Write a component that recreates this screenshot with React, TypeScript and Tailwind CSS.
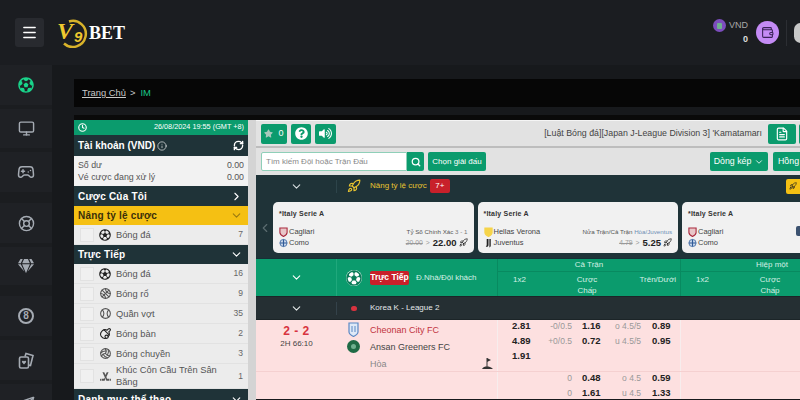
import { ReactNode } from 'react';
import {
  ChevronDown,
  ChevronLeft,
  ChevronRight,
  Clock,
  Info,
  RefreshCw,
  Rocket,
  Search,
  Monitor,
  Gamepad2,
  LifeBuoy,
  FileText,
  Wallet,
  Send,
  Menu,
} from 'lucide-react';
import { FaFutbol, FaRegFutbol, FaStar, FaQuestionCircle, FaVolumeUp, FaGem } from 'react-icons/fa';
import { TbBallBasketball, TbBallTennis, TbPingPong, TbBallVolleyball } from 'react-icons/tb';
import { MdOutlineSportsHockey } from 'react-icons/md';

const font = "font-['Liberation_Sans',Arial,sans-serif]";

function RailItem({ children, className = '' }: { children: ReactNode; className?: string }) {
  return (
    <div className={`shrink-0 flex items-center justify-center bg-[#1f2125] text-[#a5abb3] ${className}`}>
      {children}
    </div>
  );
}

function Rail() {
  return (
    <div className="w-[52px] shrink-0 flex flex-col gap-[4px] bg-[#1b1d20]">
      <RailItem className="h-[40px]">
        <FaFutbol size={16} className="text-[#19d38a]" />
      </RailItem>
      <RailItem className="h-[39px]">
        <Monitor size={17} />
      </RailItem>
      <RailItem className="h-[40px]">
        <Gamepad2 size={18} />
      </RailItem>
      <RailItem className="h-[40px] mt-[7px]">
        <LifeBuoy size={17} />
      </RailItem>
      <RailItem className="h-[38px]">
        <FaGem size={16} />
      </RailItem>
      <RailItem className="h-[40px] mt-[7px]">
        <span className="w-[16px] h-[16px] rounded-full border-2 border-[#a5abb3] flex items-center justify-center text-[10px] font-bold leading-none">
          8
        </span>
      </RailItem>
      <RailItem className="h-[40px]">
        <svg width="17" height="17" viewBox="0 0 17 17" fill="none" stroke="currentColor" strokeWidth="1.600">
          <rect x="1.500" y="5" width="9" height="11" rx="1.500" />
          <path d="M7 4.500l1-3 7 2-2.500 10-2-.5" />
          <path d="M6 12.500l-2-2.200a1 1 0 0 1 2-1 1 1 0 0 1 2 1z" fill="currentColor" stroke="none" />
        </svg>
      </RailItem>
      <RailItem className="h-[40px]">
        <Send size={17} />
      </RailItem>
    </div>
  );
}

function DarkRow({ children, h = 'h-[20px]' }: { children: ReactNode; h?: string }) {
  return (
    <div className={`${h} bg-[#1f3338] text-white font-bold text-[10px] flex items-center justify-between pl-[4px] pr-[5px] tracking-[0.2px]`}>
      {children}
    </div>
  );
}

function SportRow({
  icon,
  label,
  count,
  tall,
}: {
  icon: ReactNode;
  label: string;
  count: number;
  tall?: boolean;
}) {
  return (
    <div
      className={`flex items-center bg-[#ececec] border-b border-[#e2e2e2] pl-[6px] pr-[5px] text-[#555] text-[9.3px] ${tall ? 'h-[25px]' : 'h-[20px]'}`}
    >
      <span className="w-[14px] h-[14px] border border-[#e2e2e2] bg-[#f0f0f0] shrink-0" />
      <span className="w-[22px] flex justify-center shrink-0 text-[#555]">{icon}</span>
      <span className="flex-1 leading-[12px] pr-[8px]">{label}</span>
      <span className="text-[8.5px] text-[#666]">{count}</span>
    </div>
  );
}

function SidePanel() {
  return (
    <div className="w-[174px] shrink-0">
      <div className="h-[15px] bg-[#0b9b6d] flex items-center justify-between px-[4px] text-white">
        <Clock size={9} strokeWidth={3} />
        <span className="text-[7.3px]">26/08/2024 19:55 (GMT +8)</span>
      </div>
      <div className="h-[21px] bg-[#1f3338] text-white font-bold text-[10px] flex items-center justify-between pl-[4px] pr-[4px]">
        <span className="flex items-center gap-[2px]">
          Tài khoản (VND)
          <Info size={10} strokeWidth={1.5} />
        </span>
        <RefreshCw size={11} strokeWidth={3} />
      </div>
      <div className="h-[30px] bg-[#f2f2f2] text-[#555] text-[8.8px] leading-[12px] px-[4px] flex flex-col justify-center">
        <div className="flex justify-between">
          <span>Số dư</span>
          <span>0.00</span>
        </div>
        <div className="flex justify-between">
          <span>Vé cược đang xử lý</span>
          <span>0.00</span>
        </div>
      </div>
      <DarkRow>
        <span>Cược Của Tôi</span>
        <ChevronRight size={13} />
      </DarkRow>
      <div className="h-[19px] bg-[#f5c013] text-[#3a2f0a] font-bold text-[10px] flex items-center justify-between pl-[4px] pr-[5px] tracking-[0.2px]">
        <span>Nâng tỷ lệ cược</span>
        <ChevronDown size={13} className="text-[#9a7a10]" />
      </div>
      <SportRow icon={<FaRegFutbol size={12} className="text-[#222]" />} label="Bóng đá" count={7} />
      <DarkRow h="h-[19px]">
        <span>Trực Tiếp</span>
        <ChevronDown size={13} />
      </DarkRow>
      <SportRow icon={<FaRegFutbol size={12} className="text-[#222]" />} label="Bóng đá" count={16} />
      <SportRow icon={<TbBallBasketball size={13} />} label="Bóng rổ" count={9} />
      <SportRow icon={<TbBallTennis size={13} />} label="Quần vợt" count={35} />
      <SportRow icon={<TbPingPong size={13} className="text-[#222]" />} label="Bóng bàn" count={2} />
      <SportRow icon={<TbBallVolleyball size={13} />} label="Bóng chuyền" count={3} />
      <SportRow icon={<MdOutlineSportsHockey size={13} />} label="Khúc Côn Cầu Trên Sân Băng" count={1} tall />
      <DarkRow>
        <span>Danh mục thể thao</span>
        <ChevronDown size={13} />
      </DarkRow>
    </div>
  );
}

function GreenBtn({ children, className = '' }: { children: ReactNode; className?: string }) {
  return (
    <div className={`bg-[#0b9b6d] text-white rounded-[2px] flex items-center justify-center shrink-0 ${className}`}>
      {children}
    </div>
  );
}

function ShieldLogo({ fill, stroke }: { fill: string; stroke: string }) {
  return (
    <svg width="9" height="10" viewBox="0 0 10 11" className="shrink-0">
      <path d="M1 1h8v5c0 2-2 3.500-4 4.500C3 9.500 1 8 1 6z" fill={fill} stroke={stroke} strokeWidth="1.200" />
    </svg>
  );
}

function DiamondLogo() {
  return (
    <svg width="9" height="10" viewBox="0 0 10 10" className="shrink-0">
      <circle cx="5" cy="5" r="4" fill="#c8d6ea" stroke="#4a72a8" />
      <path d="M1 5h8M5 1v8" stroke="#2f5a96" strokeWidth="1.200" />
    </svg>
  );
}

function JuveLogo() {
  return (
    <svg width="9" height="10" viewBox="0 0 10 11" className="shrink-0">
      <path d="M3 1h2v7a2 2 0 0 1-3 1.500L3 8zM6 1h1.500v7.500A2 2 0 0 1 6 10.500z" fill="#222" />
    </svg>
  );
}

function Team({ logo, name }: { logo: ReactNode; name: string }) {
  return (
    <div className="flex items-center gap-[1px] h-[11px] text-[7.5px] text-[#444]">
      {logo}
      <span>{name}</span>
    </div>
  );
}

interface BoostCard {
  home: string;
  away: string;
  homeLogo: ReactNode;
  awayLogo: ReactNode;
  market?: ReactNode;
  oldPrice?: string;
  newPrice?: string;
  badge?: boolean;
}

const cagliari = <ShieldLogo fill="#e8c6c8" stroke="#a9283c" />;
const verona = <ShieldLogo fill="#f6d44a" stroke="#f6d44a" />;

const boostCards: BoostCard[] = [
  {
    home: 'Cagliari',
    away: 'Como',
    homeLogo: cagliari,
    awayLogo: <DiamondLogo />,
    market: (
      <>
        Tỷ Số Chính Xác <span className="text-[#777]">3 - 1</span>
      </>
    ),
    oldPrice: '20.00',
    newPrice: '22.00',
  },
  {
    home: 'Hellas Verona',
    away: 'Juventus',
    homeLogo: verona,
    awayLogo: <JuveLogo />,
    market: (
      <>
        Nửa Trận/Cả Trận <span className="text-[#6f8fb5]">Hòa/Juventus</span>
      </>
    ),
    oldPrice: '4.79',
    newPrice: '5.25',
  },
  { home: 'Cagliari', away: 'Como', homeLogo: cagliari, awayLogo: <DiamondLogo />, badge: true },
];

function Card({ card }: { card: BoostCard }) {
  return (
    <div className="w-[200.5px] h-[51px] shrink-0 bg-[#f1f1f1] rounded-[5px] px-[6px] pt-[7px] flex flex-col">
      <div className="text-[7px] font-bold text-[#333] tracking-[0.2px] leading-[10px]">*Italy Serie A</div>
      <div className="flex justify-between mt-[7px]">
        <div className="flex flex-col">
          <Team logo={card.homeLogo} name={card.home} />
          <Team logo={card.awayLogo} name={card.away} />
        </div>
        {card.badge ? (
          <div className="w-[81px]">
            <span className="block w-[12px] h-[10px] bg-[#3c5270] rounded-[2px]" />
          </div>
        ) : (
          <div className="flex flex-col items-end">
            <span className="text-[6.2px] leading-[11px] text-[#555]">{card.market}</span>
            <span className="flex items-center gap-[1px] text-[#999] text-[6.8px] leading-[11px]">
              <span className="line-through">{card.oldPrice}</span>
              <span className="px-[2px]">&gt;</span>
              <span className="text-[9.5px] font-bold text-[#222]">{card.newPrice}</span>
              <Rocket size={9} className="text-[#222] ml-[1px]" />
            </span>
          </div>
        )}
      </div>
    </div>
  );
}

function Toolbar() {
  return (
    <>
      <div className="h-[28px] w-[567px] bg-[#e2e2e2] border-t border-[#f5f5f5] border-b-2 border-b-[#bdbdbd] flex items-center pl-[5px] gap-[4px]">
        <GreenBtn className="w-[26px] h-[20px] gap-[5px] text-[9px]">
          <FaStar size={9} className="text-[#a8c9bd]" />0
        </GreenBtn>
        <GreenBtn className="w-[20px] h-[20px]">
          <FaQuestionCircle size={13} />
        </GreenBtn>
        <GreenBtn className="w-[21px] h-[20px]">
          <FaVolumeUp size={13} />
        </GreenBtn>
        <div className="flex-1 min-w-0 text-right text-[8.8px] text-[#444] whitespace-nowrap overflow-hidden pr-[2px]">
          [Luật Bóng đá][Japan J-League Division 3] 'Kamatamarı
        </div>
        <GreenBtn className="w-[28px] h-[20px]">
          <FileText size={14} />
        </GreenBtn>
        <GreenBtn className="w-[24px] h-[20px] -ml-[1px]">{null}</GreenBtn>
      </div>
      <div className="h-[27px] w-[577px] bg-[#e2e2e2] flex items-center pl-[5px] gap-[4px]">
        <div className="flex items-center">
          <div className="w-[146px] h-[19px] bg-white border border-[#8fcfb8] rounded-l-[2px] flex items-center pl-[4px] text-[8px] text-[#888]">
            Tìm kiếm Đội hoặc Trận Đấu
          </div>
          <div className="w-[17px] h-[19px] bg-[#0b9b6d] flex items-center justify-center rounded-r-[2px]">
            <Search size={10} strokeWidth={3} className="text-white" />
          </div>
        </div>
        <GreenBtn className="w-[58px] h-[19px] text-[8px] whitespace-nowrap">Chọn giải đấu</GreenBtn>
        <div className="flex-1" />
        <GreenBtn className="w-[58px] h-[19px] text-[8.8px] gap-[3px]">
          Dòng kép <ChevronDown size={10} />
        </GreenBtn>
        <GreenBtn className="w-[60px] h-[19px] text-[8.8px] justify-start pl-[5px] ml-[1px]">Hồng</GreenBtn>
      </div>
    </>
  );
}

function BoostSection() {
  return (
    <div className="h-[83px] w-[544px] bg-[#1f3338] overflow-hidden">
      <div className="h-[22px] flex items-center w-[560px]">
        <div className="w-[81px] flex justify-center text-[#d7dee0] border-r border-[#2d444a]">
          <ChevronDown size={13} />
        </div>
        <div className="w-[33px] flex justify-center">
          <Rocket size={14} className="text-[#e8c430]" />
        </div>
        <span className="text-[8px] text-[#e8c430]">Nâng tỷ lệ cược</span>
        <span className="ml-[3px] w-[20px] h-[14px] rounded-[2px] bg-[#c8202a] text-white text-[8px] flex items-center justify-center">
          7+
        </span>
        <div className="flex-1" />
        <div className="w-[30px] h-[15px] bg-[#f5c013] rounded-[2px] flex items-center pl-[3px]">
          <Rocket size={8} className="text-[#222]" />
        </div>
      </div>
      <div className="flex items-start pt-[5px]">
        <div className="w-[17px] h-[51px] flex items-center justify-center text-[#5b6c70] shrink-0">
          <ChevronLeft size={14} />
        </div>
        <div className="flex gap-[4px]">
          {boostCards.map((card, i) => (
            <Card key={i} card={card} />
          ))}
        </div>
      </div>
    </div>
  );
}

function TableHead() {
  return (
    <div className="h-[38px] flex bg-[#0b9b6d] text-white border-t border-[#163036] w-[640px]">
      <div className="w-[81px] border-r border-[#20a87c] flex items-center justify-center shrink-0">
        <ChevronDown size={13} />
      </div>
      <div className="w-[161px] flex items-center shrink-0 border-r border-[#088a60]">
        <span className="w-[33px] flex justify-center">
          <span className="w-[16px] h-[16px] rounded-full bg-white flex items-center justify-center">
            <FaRegFutbol size={16} className="text-[#0b7d59]" />
          </span>
        </span>
        <span className="bg-[#c8202a] text-[8.5px] font-bold rounded-[2px] h-[14px] w-[39px] flex items-center justify-center">
          Trực Tiếp
        </span>
        <span className="ml-[7px] text-[8px] text-[#d5f0e5]">Đ.Nhà/Đội khách</span>
      </div>
      <HeadGroup title="Cả Trận" wide />
      <HeadGroup title="Hiệp một" />
    </div>
  );
}

function HeadGroup({ title, wide }: { title: string; wide?: boolean }) {
  return (
    <div className="w-[183px] shrink-0 flex flex-col border-r border-[#088a60] text-[8px] text-[#d5f0e5]">
      <div className="h-[15px] flex items-center justify-center">{title}</div>
      <div className="flex-1 flex border-t border-[#088a60] pl-[15px] pt-[2px]">
        <span className="w-[55px]">1x2</span>
        <span className="w-[38px] text-center leading-[11px]">
          Cược
          <br />
          Chấp
        </span>
        {wide && <span className="w-[70px] text-right">Trên/Dưới</span>}
      </div>
    </div>
  );
}

function LeagueRow() {
  return (
    <div className="h-[24px] flex items-center bg-[#252f33] text-[#e4e8e9] border-y border-[#1c2528]">
      <div className="w-[81px] flex justify-center border-r border-[#34424a] shrink-0">
        <ChevronDown size={13} />
      </div>
      <span className="w-[33px] flex justify-center">
        <span className="w-[6px] h-[5px] rounded-full bg-[#d8333f]" />
      </span>
      <span className="text-[8px]">Korea K - League 2</span>
    </div>
  );
}

function OddsGrid({ rows }: { rows: string[][] }) {
  return (
    <div className="w-[183px] shrink-0 border-r border-[#f7eded]">
      <div className="-mt-[1px]">
        {rows.map((row, i) => (
          <div key={i} className="h-[15px] grid grid-cols-[50px_24px_38px_31px_40px] items-center text-[8.5px] text-[#999]">
            <span className="pl-[14px] text-[9.5px] font-bold text-[#222]">{row[0]}</span>
            <span className="text-right">{row[1]}</span>
            <span className="pl-[10px] text-[9.5px] font-bold text-[#222]">{row[2]}</span>
            <span className="text-right whitespace-nowrap">{row[3]}</span>
            <span className="pl-[11px] text-[9.5px] font-bold text-[#222]">{row[4]}</span>
          </div>
        ))}
      </div>
    </div>
  );
}

function MatchRows() {
  return (
    <div className="bg-[#fde0e0]">
      <div className="h-[52px] flex border-b border-[#f5d0d0]">
        <div className="w-[81px] shrink-0 flex flex-col items-center pt-[5px]">
          <span className="text-[12px] font-bold text-[#d8333f] leading-[13px] tracking-[0.5px]">2 - 2</span>
          <span className="text-[8px] text-[#444] leading-[11px]">2H 66:10</span>
        </div>
        <div className="w-[161px] shrink-0 border-r border-[#f7eded] flex">
          <div className="w-[33px] flex flex-col items-center pt-[2px]">
            <svg width="11" height="15" viewBox="0 0 11 15">
              <path d="M1 1h9v9c0 2-2.500 3.500-4.500 4.500C3.500 13.500 1 12 1 10z" fill="#dfe9f7" stroke="#5b88c4" strokeWidth="1.200" />
              <path d="M4 4v6M7 4v6" stroke="#5b88c4" />
            </svg>
            <span className="w-[13px] h-[13px] mt-[3px] rounded-full bg-[#1f6a45] flex items-center justify-center">
              <span className="w-[5px] h-[5px] rounded-full bg-[#6fb08f]" />
            </span>
          </div>
          <div className="flex-1 text-[9px] pt-[2px] relative leading-[17px]">
            <div className="h-[17px] text-[#c2333f]">Cheonan City FC</div>
            <div className="h-[17px] text-[#444]">Ansan Greeners FC</div>
            <div className="h-[17px] text-[#888]">Hòa</div>
            <svg width="13" height="13" viewBox="0 0 13 13" className="absolute right-[3px] bottom-[1px] text-[#333]">
              <path d="M6 1v9" stroke="currentColor" />
              <path d="M6 1l4 2-4 2z" fill="currentColor" />
              <path d="M1 12c1-2 3-2.500 5-2.500s4 .5 6 2.500z" fill="currentColor" />
            </svg>
          </div>
        </div>
        <OddsGrid
          rows={[
            ['2.81', '-0/0.5', '1.16', 'o 4.5/5', '0.89'],
            ['4.89', '+0/0.5', '0.72', 'u 4.5/5', '0.95'],
            ['1.91', '', '', '', ''],
          ]}
        />
      </div>
      <div className="h-[27px] flex">
        <div className="w-[242px] shrink-0 border-r border-[#f7eded]" />
        <OddsGrid
          rows={[
            ['', '0', '0.48', 'o 4.5', '0.59'],
            ['', '0', '1.61', 'u 4.5', '1.33'],
          ]}
        />
      </div>
    </div>
  );
}

export default function App() {
  return (
    <div className={`w-[800px] h-[400px] overflow-hidden bg-[#17191c] flex flex-col ${font}`}>
      {/* Top header */}
      <header className="h-[65px] shrink-0 bg-[#1b1d21] flex items-center pl-[15px]">
        <div className="w-[29px] h-[29px] bg-[#282a2f] rounded-[3px] flex items-center justify-center text-white">
          <Menu size={17} />
        </div>
        <div className="ml-[13px] flex items-center">
          <svg width="33" height="30" viewBox="0 0 33 30">
            <path d="M12 3.500a13 13 0 1 1-5 22" fill="none" stroke="#d9b32a" strokeWidth="2.500" />
            <text x="0" y="21" fontSize="24" fontWeight="700" fontStyle="italic" fontFamily="Liberation Serif, serif" fill="#f0c92f">V</text>
            <text x="17" y="24" fontSize="15" fontWeight="700" fontStyle="italic" fontFamily="Liberation Sans, sans-serif" fill="#f0c92f">9</text>
          </svg>
          <span className="font-['Liberation_Serif',serif] font-bold text-[18px] text-white leading-none -ml-[1px]">BET</span>
        </div>
        <div className="flex-1" />
        <div className="flex flex-col items-end mr-[8px]">
          <div className="flex items-center gap-[3px] text-[9px] text-[#a8a8a8] leading-[13px]">
            <span className="w-[13px] h-[13px] rounded-full bg-[#7c4dbd] flex items-center justify-center">
              <span className="w-[5px] h-[6px] bg-[#6fb08f] rounded-[1px]" />
            </span>
            VND
          </div>
          <span className="text-[9px] font-bold text-[#ddd] leading-[13px] mt-[1px]">0</span>
        </div>
        <div className="w-[23px] h-[23px] rounded-full bg-[#c48bf5] flex items-center justify-center text-[#3a2258]">
          <Wallet size={13} />
        </div>
        <div className="w-px h-[26px] bg-[#2c2e33] ml-[7px]" />
        <div className="w-[13px] h-[20px] rounded-full bg-[#c8c8c8] ml-[7px] mr-[-7px] shrink-0" />
      </header>

      {/* Body */}
      <div className="flex flex-1 min-h-0">
        <Rail />
        <div className="flex-1 min-w-0 pl-[22px] pt-[14px] flex flex-col">
          <div className="h-[28px] shrink-0 bg-[#060606] flex items-center pl-[8px] text-[9.4px] text-[#c9c9c9] gap-[4px]">
            <span className="underline">Trang Chủ</span>
            <span>&gt;</span>
            <span className="text-[#19c98a] ml-[1px]">IM</span>
          </div>
          <div className="h-[5px] mt-[8px] shrink-0 bg-[#0a0a0a]" />
          <div className="flex flex-1 min-h-0">
            <SidePanel />
            <div className="w-[8px] shrink-0 bg-[#d4d4d4]" />
            <div className="flex-1 min-w-0 overflow-hidden">
              <Toolbar />
              <BoostSection />
              <TableHead />
              <LeagueRow />
              <MatchRows />
            </div>
          </div>
        </div>
      </div>
    </div>
  );
}
